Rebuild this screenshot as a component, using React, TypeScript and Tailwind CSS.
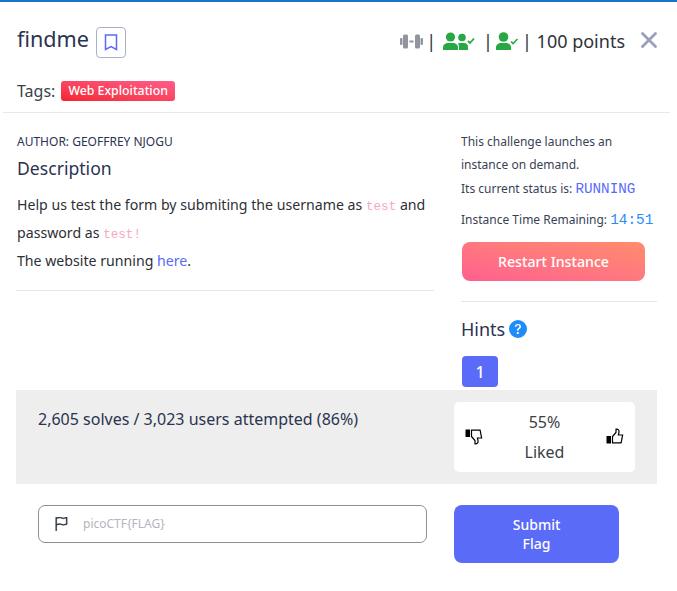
import { BsFlag, BsQuestionCircleFill } from 'react-icons/bs';
import { X } from 'lucide-react';

function Dumbbell() {
  return (
    <svg width="23" height="15" viewBox="0 0 23 15" fill="#8f949f">
      <rect x="0" y="4" width="2.5" height="7" rx="1" />
      <rect x="3" y="0.5" width="5" height="14" rx="1.5" />
      <rect x="9.5" y="6.5" width="4" height="2" />
      <rect x="15" y="0.5" width="5" height="14" rx="1.5" />
      <rect x="20.5" y="4" width="2.5" height="7" rx="1" />
    </svg>
  );
}

function PeopleCheck() {
  return (
    <svg width="32" height="18" viewBox="0 0 32 18" fill="#28a745">
      <circle cx="7.5" cy="5" r="4.6" />
      <path d="M0 18v-2.5C0 12.5 2.5 11 5 11h5c2.5 0 5 1.5 5 4.5V18z" />
      <circle cx="19" cy="5.5" r="3.8" />
      <path d="M16 18v-3c0-1.500-.5-2.500-1-3.500 1-.5 2-.5 3-.5h3c2.500 0 4 1.500 4 4v3z" />
      <path d="M25 9l2 2 4-4.500" fill="none" stroke="#28a745" strokeWidth="1.800" />
    </svg>
  );
}

function PersonCheck() {
  return (
    <svg width="23" height="18" viewBox="0 0 23 18" fill="#28a745">
      <circle cx="7.500" cy="5" r="4.800" />
      <path d="M0 18v-2.500C0 12.500 2.500 11 5 11h5c2.500 0 5 1.500 5 4.500V18z" />
      <path d="M15 9.500l2 2 4.500-4.500" fill="none" stroke="#28a745" strokeWidth="1.600" />
    </svg>
  );
}

function BookmarkIcon() {
  return (
    <svg width="14" height="17" viewBox="0 0 14 17" fill="none" stroke="#5a6bf7" strokeWidth="1.500">
      <path d="M1.500 1h11v14.500L7 12.500l-5.500 3z" />
    </svg>
  );
}

// thumb outline with the solid cuff on the left, flipped for the down vote
function Thumb({ down = false }: { down?: boolean }) {
  return (
    <svg width="18" height="16" viewBox="0 0 18 16">
      <g transform={down ? 'matrix(1 0 0 -1 0 16)' : undefined}>
        <rect x="0.500" y="8" width="4.500" height="7.500" fill="#000" />
        <path
          d="M6.500 8.500L10 4.500V1.200c2-.4 3.400 1 3 3l-.6 2.800h4.200l-1.500 7.800H6.500z"
          fill="none"
          stroke="#000"
          strokeWidth="1.200"
        />
      </g>
    </svg>
  );
}

function Header() {
  return (
    <div className="h-[111px] border-b border-[#e6e8ee] ml-[3px] mr-[7px] px-[14px]">
      <div className="flex items-center h-[84px] pb-[6px]">
        <h1 className="text-[21.6px] leading-[30px] text-[#2b3350] mb-[4px]">findme</h1>
        <button className="ml-[7px] mt-[3px] w-[30px] h-[31px] flex items-center justify-center rounded-[4px] border border-[#aab1c4]">
          <BookmarkIcon />
        </button>
        <div className="ml-auto flex items-center text-[18px] text-[#2f3237]">
          <Dumbbell />
          <span className="ml-[3px] mr-[4px]">|</span>
          <span className="ml-[3px]"><PeopleCheck /></span>
          <span className="ml-[8px] mr-[2px]">|</span>
          <span className="ml-[1px]"><PersonCheck /></span>
          <span className="ml-[3px]">| 100 points</span>
        </div>
        <X size={26} strokeWidth={2.600} className="ml-[11px] -mr-[6px] mb-[3px] text-[#98a1b8]" />
      </div>
      <div className="flex items-center text-[16px] text-[#3b3f46] h-[20px] -mt-[5px]">
        <span>Tags:</span>
        <span className="ml-[6px] h-[20px] px-[7px] rounded-[3px] bg-gradient-to-tr from-[#f5222d] to-[#ff5c8a] text-white text-[12.300px] font-medium leading-[20px]">
          Web Exploitation
        </span>
      </div>
    </div>
  );
}

function Description() {
  return (
    <div className="w-[418px] h-[178px] pl-[1px] border-b border-[#e5e5e5] text-[#2d3036]">
      <p className="text-[12px] leading-[18px] pt-[20px] text-[#2b3350]">AUTHOR: GEOFFREY NJOGU</p>
      <h2 className="text-[17.600px] leading-[24px] mt-[5px] text-[#2b3350]">Description</h2>
      <p className="text-[14.150px] leading-[28px] mt-[11px]">
        Help us test the form by submiting the username as{' '}
        <code className="font-['Liberation_Mono',monospace] text-[12.600px] leading-none text-[#f8a8c0]">test</code> and password as{' '}
        <code className="font-['Liberation_Mono',monospace] text-[12.600px] leading-none text-[#f8a8c0]">test!</code>
        <br />
        The website running <a className="text-[#5a6bf7]">here</a>.
      </p>
    </div>
  );
}

function InstancePanel() {
  return (
    <div className="w-[196px] ml-[27px] text-[12px] text-[#3a3f55]">
      <p className="leading-[23px] pt-[17px]">This challenge launches an instance on demand.</p>
      <p className="leading-[24px] mt-[1px]">
        Its current status is: <span className="font-['Liberation_Mono',monospace] text-[14.300px] leading-none text-[#5a6bf7]">RUNNING</span>
      </p>
      <p className="leading-[24px] mt-[7px]">
        Instance Time Remaining: <span className="font-['Liberation_Mono',monospace] text-[14.400px] leading-none text-[#2b8cf7]">14:51</span>
      </p>
      <button className="mt-[10px] ml-[1px] w-[183px] h-[39px] rounded-[8px] bg-gradient-to-tr from-[#ff5f8f] to-[#ff8c6b] text-white text-[14.200px] font-medium">
        Restart Instance
      </button>
      <div className="border-t border-[#e5e5e5] mt-[20px] pt-[14px]">
        <div className="flex items-center gap-[4px] text-[18px] leading-[26px] text-[#2b3350]">
          Hints <BsQuestionCircleFill size={18} className="text-[#1f8cf9]" />
        </div>
        <button className="block mt-[14px] ml-[1px] w-[36px] h-[31px] rounded-[4px] bg-[#5a6bf7] text-white text-[16px] font-medium">1</button>
      </div>
    </div>
  );
}

function StatsBar() {
  return (
    <div className="flex ml-[16px] w-[641px] h-[94px] mt-[3px] bg-[#eeeeee]">
      <p className="pl-[22px] pt-[19px] w-[438px] text-[16px] leading-[20px] text-[#2b3350]">2,605 solves / 3,023 users attempted (86%)</p>
      <div className="mt-[12px] w-[181px] h-[70px] rounded-[5px] bg-white flex items-center justify-between pl-[11px] pr-[11px] text-[#3a3f46]">
        <Thumb down />
        <div className="text-center text-[16px] leading-[30px]">55%<br />Liked</div>
        <span className="-mt-[3px]"><Thumb /></span>
      </div>
    </div>
  );
}

function FlagForm() {
  return (
    <div className="flex items-start pl-[38px] pt-[21px]">
      <div className="w-[389px] h-[38px] rounded-[7px] border border-[#8a9099] flex items-center pl-[15px]">
        <BsFlag size={14} className="text-[#1e2633] stroke-[0.5px]" />
        <span className="ml-[15px] text-[12px] text-[#b3b6bd]">picoCTF&#123;FLAG&#125;</span>
      </div>
      <button className="ml-[27px] w-[165px] h-[58px] rounded-[8px] bg-[#5a6bf7] text-white text-[14px] font-medium leading-[19px]">
        Submit<br />Flag
      </button>
    </div>
  );
}

export default function App() {
  return (
    <div className="w-[677px] h-[591px] bg-white overflow-hidden font-['Noto_Sans',sans-serif]">
      <div className="h-[2px] bg-[#1a73c9]" />
      <Header />
      <div className="flex pl-[16px] h-[274px]">
        <Description />
        <InstancePanel />
      </div>
      <StatsBar />
      <FlagForm />
    </div>
  );
}
